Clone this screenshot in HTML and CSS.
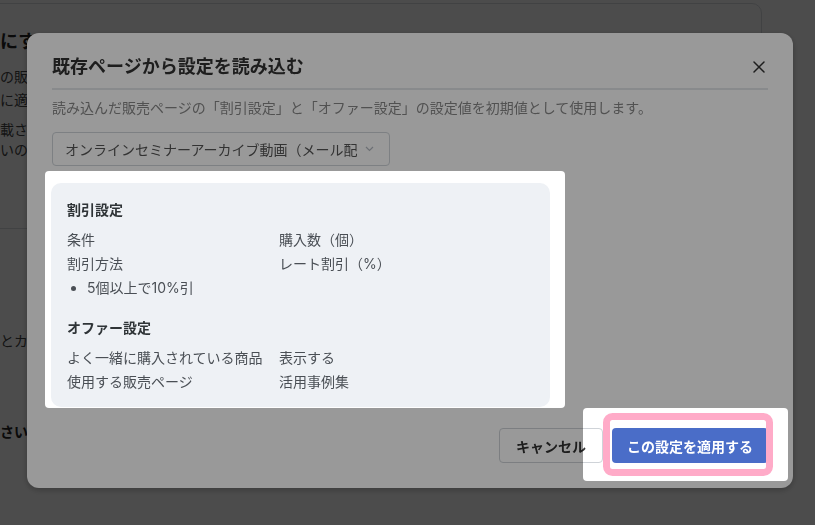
FILE: index.html
```html
<!DOCTYPE html>
<html lang="ja">
<head>
    <meta charset="UTF-8">
    <meta name="viewport" content="width=device-width, initial-scale=1.0">
    <title>既存ページから設定を読み込む</title>
    <link rel="stylesheet" href="styles.css">
</head>
<body>
    <!-- 背景の編集画面 -->
    <main class="page">
        <section class="card">
            <h2 class="card-title">にする</h2>
            <p class="card-text">の販売</p>
            <p class="card-text">に適用</p>
            <p class="card-sub">載され</p>
            <p class="card-sub">いの対</p>
        </section>
        <p class="page-note">とカ</p>
        <p class="page-label">さい)</p>
    </main>

    <!-- モーダル -->
    <div class="modal">
        <div class="dialog">
            <div class="dialog-header">
                <h1 class="dialog-title">既存ページから設定を読み込む</h1>
                <button class="dialog-close" type="button" aria-label="閉じる">
                    <svg width="12" height="12" viewBox="0 0 12 12">
                        <path d="M1 1L11 11M11 1L1 11" stroke="#333" stroke-width="1.5" stroke-linecap="round" fill="none"/>
                    </svg>
                </button>
            </div>
            <p class="dialog-desc">読み込んだ販売ページの「割引設定」と「オファー設定」の設定値を初期値として使用します。</p>

            <div class="select">
                <span class="select-value">オンラインセミナーアーカイブ動画（メール配信付き）</span>
                <svg class="select-arrow" width="9" height="6" viewBox="0 0 9 6">
                    <polyline points="1,1 4.5,4.5 8,1" stroke="#b4bac2" stroke-width="1.2" fill="none"/>
                </svg>
            </div>

            <div class="preview">
                <div class="preview-panel">
                    <h3 class="preview-heading">割引設定</h3>
                    <dl class="preview-grid">
                        <dt>条件</dt><dd>購入数（個）</dd>
                        <dt>割引方法</dt><dd>レート割引（%）</dd>
                    </dl>
                    <ul class="preview-list">
                        <li>5個以上で10%引</li>
                    </ul>
                    <h3 class="preview-heading second">オファー設定</h3>
                    <dl class="preview-grid">
                        <dt>よく一緒に購入されている商品</dt><dd>表示する</dd>
                        <dt>使用する販売ページ</dt><dd>活用事例集</dd>
                    </dl>
                </div>
            </div>

            <div class="dialog-footer">
                <button class="btn btn-cancel" type="button">キャンセル</button>
                <button class="btn btn-primary" type="button">この設定を適用する</button>
            </div>
        </div>
    </div>

    <!-- ガイドのハイライト -->
    <svg class="tour-overlay" width="815" height="525" viewBox="0 0 815 525">
        <defs>
            <mask id="tour-holes">
                <rect width="815" height="525" fill="#fff"/>
                <rect x="45" y="171" width="520" height="237" rx="4" fill="#000"/>
                <rect x="583" y="408" width="205" height="73" rx="4" fill="#000"/>
            </mask>
        </defs>
        <rect width="815" height="525" fill="rgba(0,0,0,0.4)" mask="url(#tour-holes)"/>
        <rect class="tour-ring" x="606.5" y="416.5" width="163" height="56" rx="6"/>
    </svg>
</body>
</html>
```

FILE: styles.css
```css
* {
    margin: 0;
    padding: 0;
    box-sizing: border-box;
}
body {
    font-family: "Inter", "Noto Sans CJK JP", sans-serif;
    font-size: 14px;
    color: #333;
    background: #fff;
    width: 815px;
    height: 525px;
    overflow: hidden;
}

/* 背景ページ */
.page {
    margin-left: -20px;
    padding-top: 3px;
}
.card {
    width: 782px;
    height: 226px;
    border: 1px solid #d9dde2;
    border-radius: 10px;
    padding: 25px 19px 0;
}
.card-title {
    font-size: 18px;
    line-height: 26px;
    font-weight: bold;
    color: #222;
    white-space: nowrap;
}
.card-text {
    margin-top: 10px;
    line-height: 23px;
    color: #444;
    white-space: nowrap;
}
.card-text + .card-text {
    margin-top: 0;
}
.card-sub {
    margin-top: 9px;
    line-height: 20px;
    color: #444;
    white-space: nowrap;
}
.card-sub + .card-sub {
    margin-top: 0;
}
.page-note {
    margin-top: 102px;
    padding-left: 20px;
    line-height: 20px;
    color: #444;
    white-space: nowrap;
}
.page-label {
    margin-top: 71px;
    padding-left: 20px;
    line-height: 20px;
    font-weight: bold;
    color: #222;
    white-space: nowrap;
}

/* モーダル */
.modal {
    position: fixed;
    inset: 0;
    background: rgba(0, 0, 0, 0.5);
    padding: 33px 22px 0 27px;
}
.dialog {
    background: #fff;
    border-radius: 12px;
    padding: 0 25px 25px;
    box-shadow: 0 2px 6px rgba(0, 0, 0, 0.25);
}
.dialog-header {
    display: flex;
    justify-content: space-between;
    align-items: center;
    padding: 20px 0 7px;
    border-bottom: 2px solid #e3e6ea;
}
.dialog-title {
    font-size: 18px;
    line-height: 28px;
    font-weight: bold;
    color: #333;
}
.dialog-close {
    width: 16px;
    height: 16px;
    display: flex;
    align-items: center;
    justify-content: center;
    border: none;
    background: none;
    margin-right: 1px;
}
.dialog-desc {
    margin-top: 8px;
    line-height: 20px;
    color: #888;
}

.select {
    display: flex;
    align-items: center;
    width: 338px;
    height: 34px;
    margin-top: 14px;
    padding: 0 15px 0 12px;
    border: 1px solid #d0d5db;
    border-radius: 4px;
    color: #555;
}
.select-value {
    flex: 1;
    overflow: hidden;
    white-space: nowrap;
}
.select-arrow {
    margin-left: 8px;
    flex-shrink: 0;
}

/* 読み込み内容のプレビュー */
.preview {
    width: 520px;
    margin: 5px 0 0 -7px;
    padding: 12px 15px 1px 6px;
    background: #fff;
    border-radius: 4px;
}
.preview-panel {
    background: #eef1f5;
    border-radius: 10px;
    padding: 16px 16px 13px;
    color: #4a4f55;
}
.preview-heading {
    font-size: 14px;
    line-height: 22px;
    font-weight: bold;
    color: #2f3437;
    margin-bottom: 7px;
}
.preview-heading.second {
    margin-top: 17px;
}
.preview-grid {
    display: grid;
    grid-template-columns: 212px 1fr;
    line-height: 24px;
}
.preview-list {
    padding-left: 20px;
    line-height: 24px;
}

.dialog-footer {
    display: flex;
    justify-content: flex-end;
    gap: 9px;
    margin-top: 20px;
}
.btn {
    height: 35px;
    padding: 0 16px;
    border-radius: 4px;
    font-family: inherit;
    font-size: 14px;
    cursor: pointer;
}
.btn-cancel {
    background: #fff;
    border: 1px solid #cfd3d8;
    color: #333;
    font-weight: 600;
}
.btn-primary {
    padding: 0 15px;
    background: #4a6dc8;
    border: none;
    color: #fff;
    font-weight: bold;
}

/* ガイドのオーバーレイ */
.tour-overlay {
    position: fixed;
    top: 0;
    left: 0;
    pointer-events: none;
}
.tour-ring {
    fill: none;
    stroke: #ffabc8;
    stroke-width: 7;
}
```
